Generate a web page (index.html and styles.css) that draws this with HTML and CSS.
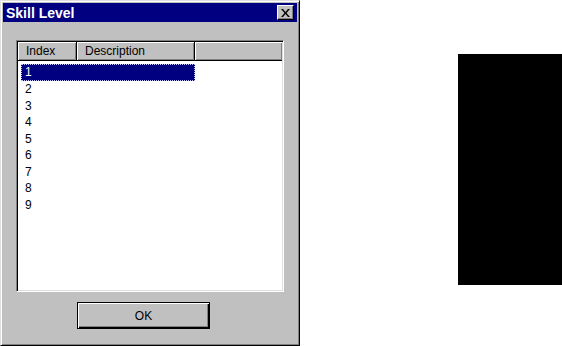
FILE: index.html
```html
<!DOCTYPE html>
<html>
<head>
<meta charset="utf-8">
<link rel="stylesheet" href="styles.css">
</head>
<body>
<div class="page">
  <div class="dialog">
    <div class="titlebar">
      <span class="title">Skill Level</span>
      <button class="close" aria-label="Close">
        <svg width="9" height="8" viewBox="0 0 9 8"><path d="M0 0h2l2.5 3 2.5-3h2L5.5 4 9 8H7L4.5 5 2 8H0l3.5-4z" fill="#000"/></svg>
      </button>
    </div>
    <div class="body">
      <div class="list">
        <div class="header">
          <div class="col col-index">Index</div>
          <div class="col col-desc">Description</div>
          <div class="col col-rest"></div>
        </div>
        <div class="rows">
          <div class="row selected">1</div>
          <div class="row">2</div>
          <div class="row">3</div>
          <div class="row">4</div>
          <div class="row">5</div>
          <div class="row">6</div>
          <div class="row">7</div>
          <div class="row">8</div>
          <div class="row">9</div>
        </div>
      </div>
      <div class="actions">
        <button class="ok">OK</button>
      </div>
    </div>
  </div>
  <div class="block"></div>
</div>
</body>
</html>
```
FILE: styles.css
```css
* { box-sizing: border-box; }
html, body { margin: 0; padding: 0; background: #fff; }
body { font-family: "Liberation Sans", Arial, sans-serif; }
.page {
  display: flex;
  width: 562px;
  height: 346px;
  gap: 158px;
}
.dialog {
  width: 300px;
  height: 346px;
  background: #c0c0c0;
  border: 1px solid;
  border-color: #dfdfdf #000 #000 #dfdfdf;
  box-shadow: inset 1px 1px #fff, inset -1px -1px #808080;
  padding: 2px;
  display: flex;
  flex-direction: column;
}
.titlebar {
  height: 19px;
  background: #000080;
  display: flex;
  align-items: center;
  justify-content: space-between;
  padding: 0 3px 0 3px;
}
.title {
  color: #fff;
  font-weight: bold;
  font-size: 14px;
  line-height: 19px;
  padding-top: 1px;
}
.close {
  width: 17px;
  height: 15px;
  padding: 0;
  margin: 0;
  background: #c0c0c0;
  border: 1px solid;
  border-color: #fff #000 #000 #fff;
  box-shadow: inset -1px -1px #808080;
  display: flex;
  align-items: center;
  justify-content: center;
}
.close svg { display: block; margin-left: -1px; }
.body {
  flex: 1;
  padding: 18px 13px 0 13px;
  display: flex;
  flex-direction: column;
}
.list {
  height: 252px;
  background: #fff;
  border: 1px solid;
  border-color: #808080 #fff #fff #808080;
  box-shadow: inset 1px 1px #000, inset -1px -1px #dfdfdf;
  padding: 1px;
  display: flex;
  flex-direction: column;
}
.header {
  display: flex;
  height: 19px;
}
.col {
  background: #c0c0c0;
  height: 19px;
  font-size: 12px;
  line-height: 19px;
  color: #000;
  padding-left: 8px;
  border-right: 1px solid #000;
  border-bottom: 1px solid #000;
  box-shadow: inset 1px 1px #fff, inset -1px -1px #808080;
}
.col-index { width: 59px; }
.col-desc { width: 118px; }
.col-rest { flex: 1; border-right: none; }
.rows {
  padding: 3px 0 0 3px;
}
.row {
  width: 174px;
  height: 16.5px;
  line-height: 16.5px;
  font-size: 12px;
  padding-left: 4px;
  color: #000;
}
.row.selected {
  background: #000080;
  color: #fff;
  height: 17px;
  line-height: 17px;
  outline: 1px dotted #c0c0ff;
  outline-offset: -1px;
}
.actions {
  padding: 10px 0 0 61px;
}
.ok {
  width: 133px;
  height: 27px;
  background: #c0c0c0;
  border: 1px solid #000;
  box-shadow: inset 1px 1px #fff, inset -1px -1px #000, inset -2px -2px #808080;
  font-family: "Liberation Sans", Arial, sans-serif;
  font-size: 12px;
  color: #000;
  padding: 0;
}
.block {
  width: 104px;
  height: 231px;
  margin-top: 54px;
  background: #000;
}
```
